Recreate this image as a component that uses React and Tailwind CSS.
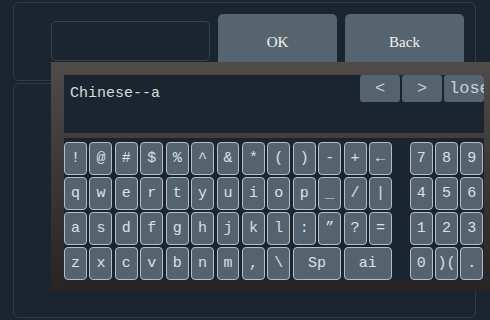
import React from "react";

const mono = { fontFamily: '"Liberation Mono", "DejaVu Sans Mono", monospace' };
const serif = { fontFamily: '"Liberation Serif", "DejaVu Serif", serif' };

function Key({ label, span2 }) {
  return (
    <div
      className={`flex items-center justify-center h-[33px] rounded-[4px] border border-[#b4bec7] bg-[#55636f] text-[#d9e0e6] text-[15px] leading-none ${span2 ? "col-span-2" : ""}`}
    >
      {label}
    </div>
  );
}

export default function App() {
  const rows = [
    ["!", "@", "#", "$", "%", "^", "&", "*", "(", ")", "-", "+", "←"],
    ["q", "w", "e", "r", "t", "y", "u", "i", "o", "p", "_", "/", "|"],
    ["a", "s", "d", "f", "g", "h", "j", "k", "l", ":", "\u201D", "?", "="],
  ];
  const last = ["z", "x", "c", "v", "b", "n", "m", ",", "\\"];
  const num = ["7", "8", "9", "4", "5", "6", "1", "2", "3", "0", ")(", "."];

  return (
    <div className="relative w-[490px] h-[320px] overflow-hidden bg-[#1b2530]" style={mono}>
      <div className="pt-[2px] pl-[13px]">
        <div className="w-[463px] h-[79px] rounded-[6px] border border-[#2f3d49] flex items-start pl-[37px] pt-[11px]">
          <div className="mt-[7px] w-[159px] h-[40px] rounded-[5px] border border-[#34434f]" />
          <div className="ml-[8px] w-[119px] h-[56px] rounded-[5px] bg-[#56646f] flex items-center justify-center text-[#f2f2f2] text-[15px]" style={serif}>
            OK
          </div>
          <div className="ml-[8px] w-[119px] h-[56px] rounded-[5px] bg-[#56646f] flex items-center justify-center text-[#f2f2f2] text-[15px]" style={serif}>
            Back
          </div>
        </div>
        <div className="mt-[2px] w-[463px] h-[235px] rounded-[6px] border border-[#2f3d49]" />
      </div>

      <div className="absolute left-[51px] top-[62px] w-[446px] px-[13px] pt-[13px] pb-[11px] bg-linear-to-b from-[#4e4b48] to-[#272421]">
        <div className="h-[58px] bg-[#1b2530] flex items-start justify-between">
          <div className="pl-[6px] pt-[8px] text-[15px] text-[#d6d9dc]">Chinese--a</div>
          <div className="flex gap-[2px]">
            <div className="w-[40px] h-[27px] rounded-[3px] bg-[#55636f] flex items-center justify-center text-[#c9d1d8] text-[17px] leading-none">&lt;</div>
            <div className="w-[40px] h-[27px] rounded-[3px] bg-[#55636f] flex items-center justify-center text-[#c9d1d8] text-[17px] leading-none">&gt;</div>
            <div className="w-[40px] h-[27px] rounded-[3px] bg-[#55636f] overflow-hidden flex items-center pl-[5px] text-[#c9d1d8] text-[17px] leading-none whitespace-nowrap">lose</div>
          </div>
        </div>
        <div className="mt-[5px] w-[420px] bg-[#1b2530] pt-[4px] pb-[1px] flex">
          <div className="w-[328px] grid grid-cols-13 gap-x-[2.5px] gap-y-[2px]">
            {rows.flat().map((k, i) => (
              <Key key={i} label={k} />
            ))}
            {last.map((k, i) => (
              <Key key={"l" + i} label={k} />
            ))}
            <Key label="Sp" span2 />
            <Key label="ai" span2 />
          </div>
          <div className="ml-[18px] w-[73px] grid grid-cols-3 gap-x-[2.5px] gap-y-[2px]">
            {num.map((k, i) => (
              <Key key={"n" + i} label={k} />
            ))}
          </div>
        </div>
      </div>
    </div>
  );
}
